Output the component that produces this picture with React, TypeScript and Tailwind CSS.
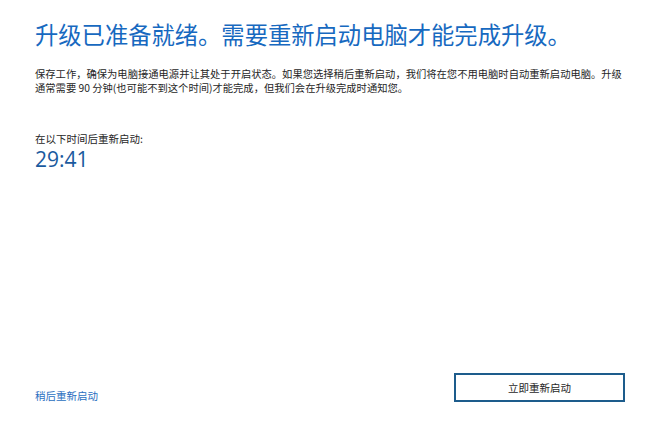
export default function App() {
    const cjk = "font-['Noto_Sans_CJK_SC','Noto_Sans',sans-serif]";

    return (
        <main className={`flex h-[429px] w-[648px] flex-col bg-white pl-[35px] pr-[23px] ${cjk}`}>
            <h1 className="mt-[18px] text-[23.3px] leading-[32px] font-normal text-[#1769c0]">
                升级已准备就绪。需要重新启动电脑才能完成升级。
            </h1>

            <p className="mt-[17px] whitespace-nowrap text-[10.3px] leading-[13.5px] text-[#262626]">
                保存工作，确保为电脑接通电源并让其处于开启状态。如果您选择稍后重新启动，我们将在您不用电脑时自动重新启动电脑。升级
                <br />
                通常需要 90 分钟(也可能不到这个时间)才能完成，但我们会在升级完成时通知您。
            </p>

            <div className="mt-[38px] flex flex-col">
                <span className="text-[10.5px] leading-[14px] text-[#262626]">在以下时间后重新启动:</span>
                <span className="mt-[1px] font-['Open_Sans',sans-serif] text-[21px] leading-[24px] text-[#1a5a9e]">
                    29:41
                </span>
            </div>

            <div className="mt-auto mb-[26px] flex items-center justify-between">
                <a className="mt-[17px] text-[10.5px] leading-[14px] text-[#2a6fbf]">稍后重新启动</a>
                <button className="h-[29px] w-[171px] border-2 border-[#1d5c8c] bg-white text-[10.5px] text-[#1f1f1f]">
                    立即重新启动
                </button>
            </div>
        </main>
    );
}
